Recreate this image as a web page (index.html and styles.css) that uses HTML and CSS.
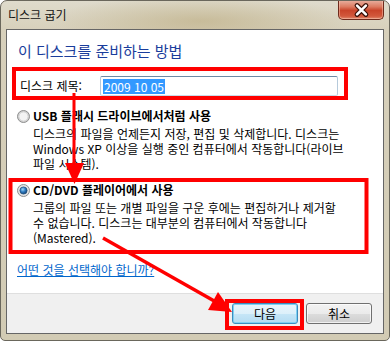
FILE: index.html
```html
<!DOCTYPE html>
<html lang="ko">
<head>
<meta charset="utf-8">
<title>디스크 굽기</title>
<link rel="stylesheet" href="styles.css">
</head>
<body>
<div class="window">
  <div class="titlebar">
    <span class="title">디스크 굽기</span>
    <div class="close">
      <svg width="46" height="20" viewBox="0 0 46 20">
        <path d="M19.5 5.5 L28.5 14.5 M28.5 5.5 L19.5 14.5" stroke="#3b1209" stroke-width="5" stroke-linecap="round"/>
        <path d="M19.5 5.5 L28.5 14.5 M28.5 5.5 L19.5 14.5" stroke="#ffffff" stroke-width="2.6" stroke-linecap="round"/>
      </svg>
    </div>
  </div>
  <div class="client">
    <div class="main">
      <h1 class="heading">이 디스크를 준비하는 방법</h1>
      <div class="title-row">
        <span class="label">디스크 제목:</span>
        <div class="input"><span class="sel">2009 10 05</span></div>
      </div>
      <div class="option">
        <svg class="radio" width="13" height="13" viewBox="0 0 13 13">
          <defs>
            <radialGradient id="rg1" cx="0.5" cy="0.5" r="0.6">
              <stop offset="0" stop-color="#e6e6e6"/>
              <stop offset="1" stop-color="#c8c8c8"/>
            </radialGradient>
          </defs>
          <circle cx="6.5" cy="6.5" r="6" fill="url(#rg1)" stroke="#8e8f8f"/>
          <circle cx="6.5" cy="6.5" r="4.5" fill="#f3f3f3" stroke="#d0d0d0" stroke-width="0.8"/>
        </svg>
        <div class="opt-text">
          <div class="opt-title">USB 플래시 드라이브에서처럼 사용</div>
          <div class="opt-desc">디스크의 파일을 언제든지 저장, 편집 및 삭제합니다. 디스크는<br>Windows XP 이상을 실행 중인 컴퓨터에서 작동합니다(라이브<br>파일 시스템).</div>
        </div>
      </div>
      <div class="option option2">
        <svg class="radio" width="13" height="13" viewBox="0 0 13 13">
          <defs>
            <radialGradient id="rg2" cx="0.4" cy="0.35" r="0.7">
              <stop offset="0" stop-color="#9fd8f7"/>
              <stop offset="0.5" stop-color="#2f7ac0"/>
              <stop offset="1" stop-color="#12406f"/>
            </radialGradient>
          </defs>
          <circle cx="6.5" cy="6.5" r="6" fill="#e4e4e4" stroke="#8e8f8f"/>
          <circle cx="6.5" cy="6.5" r="3.6" fill="url(#rg2)" stroke="#1d4a75" stroke-width="0.7"/>
        </svg>
        <div class="opt-text">
          <div class="opt-title">CD/DVD 플레이어에서 사용</div>
          <div class="opt-desc">그룹의 파일 또는 개별 파일을 구운 후에는 편집하거나 제거할<br>수 없습니다. 디스크는 대부분의 컴퓨터에서 작동합니다<br>(Mastered).</div>
        </div>
      </div>
      <a class="help" href="#">어떤 것을 선택해야 합니까?</a>
    </div>
    <div class="footer">
      <button class="btn default">다음</button>
      <button class="btn">취소</button>
    </div>
  </div>
  <svg class="annot" width="390" height="341" viewBox="0 0 390 341">
    <g fill="none" stroke="#ff0000" stroke-width="4">
      <rect x="14" y="69" width="332" height="29"/>
      <rect x="10.5" y="180" width="356" height="72"/>
      <rect x="227" y="301" width="75" height="27"/>
    </g>
    <line x1="74" y1="93" x2="74" y2="166" stroke="#ff0000" stroke-width="3"/>
    <polygon points="65,163 84,163 74.5,184" fill="#ff0000"/>
    <line x1="103" y1="238" x2="216" y2="302" stroke="#ff0000" stroke-width="3.5"/>
    <polygon points="218,292 208,310 232,312" fill="#ff0000"/>
  </svg>
</div>
</body>
</html>
```

FILE: styles.css
```css
* {
  box-sizing: border-box;
  margin: 0;
  padding: 0;
}

html,
body {
  width: 390px;
  height: 341px;
  overflow: hidden;
}

body {
  font-family: "Noto Sans CJK KR", "Noto Sans", sans-serif;
  font-size: 12px;
  color: #000;
  background: #ffffff;
}

.window {
  position: relative;
  width: 390px;
  height: 341px;
  display: flex;
  flex-direction: column;
  border: 1px solid #6a675c;
  border-radius: 7px 7px 5px 5px;
  background:
    radial-gradient(ellipse 150px 26px at 200px 20px, rgba(185, 168, 122, 0.55), rgba(185, 168, 122, 0) 100%),
    linear-gradient(#dfdbcc, #d7d0bb 30px, #d2cbb4);
  overflow: hidden;
}

.titlebar {
  height: 28px;
  display: flex;
  align-items: flex-start;
  padding-left: 7px;
}

.title {
  margin-top: 6px;
  line-height: 16px;
  color: #111;
}

.close {
  margin-left: auto;
  margin-right: 5px;
  margin-top: -1px;
  width: 46px;
  height: 20px;
  border: 1px solid #6e2a1c;
  border-top: none;
  border-radius: 0 0 5px 5px;
  background: linear-gradient(#e9b3a3 0%, #dc7b62 35%, #c9442a 55%, #d2583c 85%, #e08a6e 100%);
  box-shadow: inset 0 0 0 1px rgba(255, 210, 190, 0.45);
  display: flex;
}

.close svg {
  display: block;
  margin-left: -1px;
}

.client {
  flex: 1;
  margin: 0 5px 6px 5px;
  border: 1px solid #666666;
  background: #ffffff;
  display: flex;
  flex-direction: column;
}

.main {
  height: 263px;
  display: flex;
  flex-direction: column;
  align-items: flex-start;
}

.heading {
  margin-top: 11px;
  padding-left: 11px;
  font-size: 15px;
  line-height: 20px;
  font-weight: normal;
  color: #1a3d9c;
}

.title-row {
  margin-top: 15px;
  height: 20px;
  display: flex;
  align-items: center;
  padding-left: 13px;
}

.label {
  width: 80px;
  line-height: 16px;
}

.input {
  width: 238px;
  height: 20px;
  border: 1px solid;
  border-color: #6d8aa6 #b6cadb #c8dbe8 #b6cadb;
  border-radius: 2px;
  padding: 1px 0 0 2px;
  display: flex;
  align-items: center;
}

.sel {
  background: #3399ff;
  color: #ffffff;
  line-height: 15px;
  padding: 0 1px;
}

.option {
  margin-top: 12px;
  padding-left: 10px;
  display: flex;
  gap: 3px;
  align-items: flex-start;
}

.option2 {
  margin-top: 11px;
}

.radio {
  display: block;
  flex: none;
  margin-top: 2px;
}

.opt-title {
  font-weight: bold;
  line-height: 16px;
}

.opt-desc {
  margin-top: 2px;
  line-height: 15px;
}

.help {
  margin-top: 17px;
  margin-left: 10px;
  line-height: 16px;
  color: #0066cc;
  text-decoration: underline;
}

.footer {
  flex: 1;
  border-top: 1px solid #dfdfdf;
  background: #f0f0f0;
  display: flex;
  justify-content: flex-end;
  align-items: flex-start;
  gap: 8px;
  padding: 9px 11px 0 0;
}

.btn {
  width: 66px;
  height: 21px;
  font-family: inherit;
  font-size: 12px;
  color: #000;
  border: 1px solid #707070;
  border-radius: 3px;
  background: linear-gradient(#f2f2f2 0%, #ebebeb 50%, #dddddd 51%, #cfcfcf 100%);
  box-shadow: inset 0 0 0 1px rgba(255, 255, 255, 0.7);
}

.btn.default {
  border-color: #3c8cbf;
  background: linear-gradient(#e9f5fc 0%, #dcf0fa 50%, #c6e6f7 51%, #b4dcf2 100%);
  box-shadow: inset 0 0 0 1px #7fd0f2;
}

.annot {
  position: absolute;
  left: -1px;
  top: -1px;
  pointer-events: none;
}
```
